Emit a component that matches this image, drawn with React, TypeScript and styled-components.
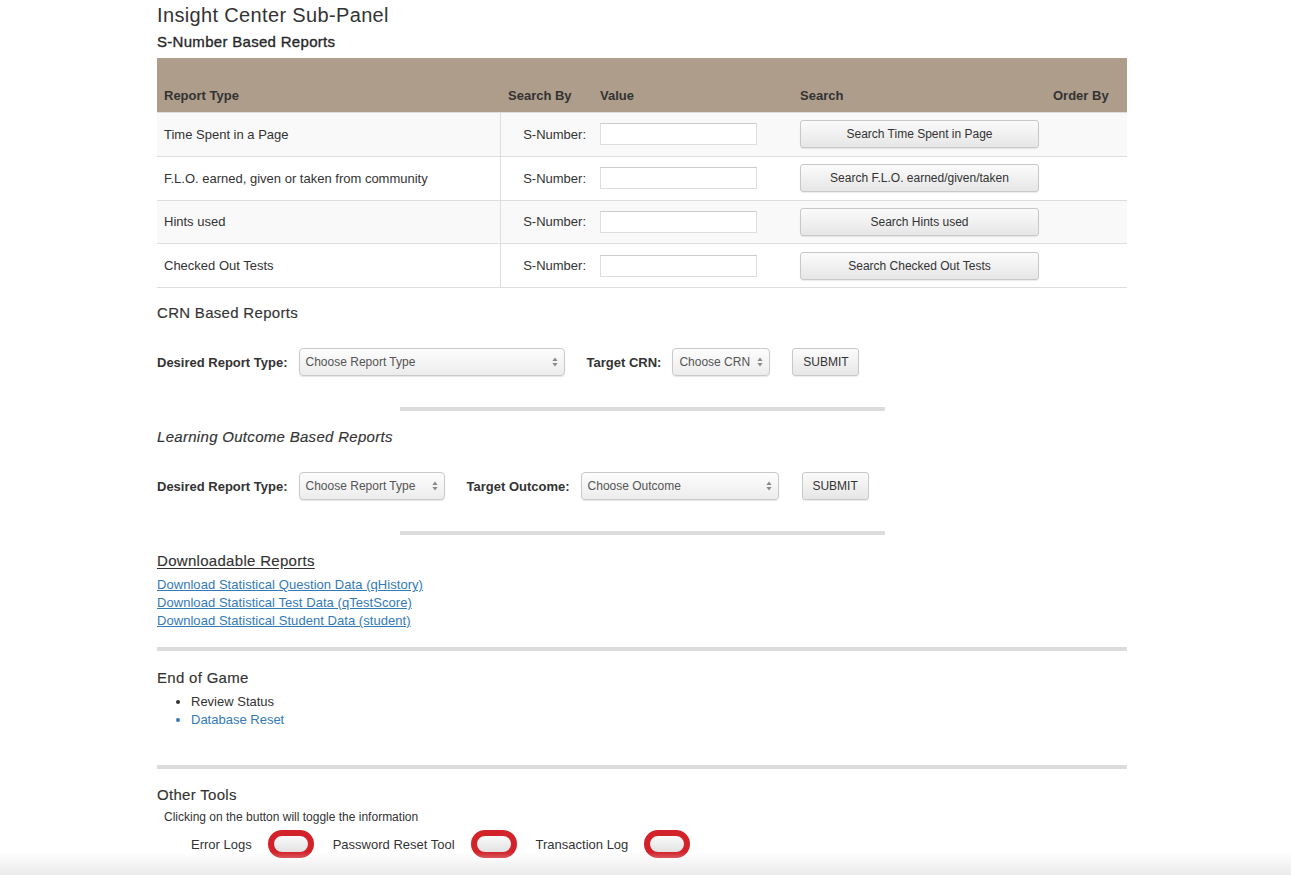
import React from "react";
import styled, { createGlobalStyle } from "styled-components";

const Global = createGlobalStyle`
  html, body { margin: 0; padding: 0; background: #fff; }
  body {
    font-family: "Liberation Sans", Arial, Helvetica, sans-serif;
    font-size: 13px;
    color: #333;
  }
  * { box-sizing: border-box; }
`;

const Page = styled.div`
  width: 100%;
  min-height: 875px;
  display: flex;
  flex-direction: column;
`;

const Content = styled.div`
  margin-left: 157px;
  width: 970px;
  display: flex;
  flex-direction: column;
`;

const Title = styled.h1`
  margin: 4px 0 0;
  font-size: 20px;
  line-height: 22px;
  font-weight: 400;
  color: #333;
  letter-spacing: 0.35px;
`;

const Heading = styled.h3<{ $top: number; $italic?: boolean; $underline?: boolean; $strong?: boolean }>`
  margin: ${(p) => p.$top}px 0 0;
  font-size: 15px;
  line-height: 18px;
  font-weight: 400;
  color: ${(p) => (p.$strong ? "#222" : "#333")};
  letter-spacing: 0.3px;
  font-style: ${(p) => (p.$italic ? "italic" : "normal")};
  text-decoration: ${(p) => (p.$underline ? "underline" : "none")};
  text-underline-offset: 2px;
  -webkit-text-stroke: ${(p) => (p.$strong ? "0.35px #333" : "0.15px #333")};
`;

const Table = styled.div`
  margin-top: 7px;
  display: flex;
  flex-direction: column;
  border-bottom: 1px solid #ddd;
`;

const cols = "344px 92px 200px 253px 81px";

const HeadRow = styled.div`
  display: grid;
  grid-template-columns: ${cols};
  height: 54px;
  background: #ae9d8a;
  align-items: end;
`;

const HeadCell = styled.div`
  padding: 0 7px 7px;
  font-weight: 700;
  font-size: 13px;
  line-height: 18px;
  color: #333;
`;

const BodyRow = styled.div<{ $striped: boolean }>`
  display: grid;
  grid-template-columns: ${cols};
  height: 43.75px;
  border-top: 1px solid #ddd;
  background: ${(p) => (p.$striped ? "#f9f9f9" : "#fff")};
`;

const Cell = styled.div<{ $divider?: boolean; $right?: boolean }>`
  display: flex;
  align-items: center;
  justify-content: ${(p) => (p.$right ? "flex-end" : "flex-start")};
  padding: 0 7px;
  font-size: 13px;
  color: #333;
  border-right: ${(p) => (p.$divider ? "1px solid #ddd" : "none")};
`;

const TextInput = styled.input`
  width: 157px;
  height: 22px;
  border: 1px solid #ddd;
  border-top-color: #ccc;
  background: #fff;
  padding: 2px 4px;
  font-family: inherit;
  font-size: 12px;
  outline: none;
`;

const GrayButton = styled.button<{ $w: number }>`
  width: ${(p) => p.$w}px;
  height: 28px;
  border: 1px solid #c8c8c8;
  border-radius: 3px;
  background: linear-gradient(#fbfbfb, #e6e6e6);
  box-shadow: 0 1px 1px rgba(0, 0, 0, 0.08);
  font-family: "Liberation Sans", Arial, sans-serif;
  font-size: 12px;
  color: #333;
  padding: 0;
  cursor: pointer;
`;

const FormRow = styled.div`
  margin-top: 26px;
  display: flex;
  align-items: center;
  height: 28px;
`;

const FormLabel = styled.span<{ $gap: number }>`
  font-weight: 700;
  font-size: 13px;
  color: #333;
  margin-right: ${(p) => p.$gap}px;
`;

const SelectBox = styled.div<{ $w: number; $after: number }>`
  width: ${(p) => p.$w}px;
  height: 28px;
  margin-right: ${(p) => p.$after}px;
  display: flex;
  align-items: center;
  justify-content: space-between;
  padding: 0 6px 0 6px;
  border: 1px solid #c9c9c9;
  border-radius: 4px;
  background: linear-gradient(#fdfdfd, #ececec);
  box-shadow: 0 1px 1px rgba(0, 0, 0, 0.1);
  font-size: 12px;
  color: #555;
`;

const HalfRule = styled.div`
  margin: 31px auto 0;
  width: 50%;
  height: 4px;
  background: #dcdcdc;
`;

const FullRule = styled.div<{ $top: number }>`
  margin-top: ${(p) => p.$top}px;
  width: 100%;
  height: 4px;
  background: #dcdcdc;
`;

const LinkList = styled.div`
  margin-top: 6px;
  display: flex;
  flex-direction: column;
`;

const Link = styled.a`
  font-size: 13px;
  line-height: 18px;
  color: #337ab7;
  text-decoration: underline;
  align-self: flex-start;
  letter-spacing: 0.05px;
`;

const Bullets = styled.ul`
  margin: 6px 0 0;
  padding-left: 34px;
`;

const Item = styled.li<{ $link?: boolean }>`
  font-size: 13px;
  line-height: 18px;
  color: ${(p) => (p.$link ? "#337ab7" : "#333")};
`;

const Note = styled.div`
  margin-top: 5px;
  padding-left: 7px;
  font-size: 12px;
  line-height: 16px;
  color: #333;
`;

const ToggleRow = styled.div`
  margin-top: 5px;
  padding-left: 34px;
  display: flex;
  align-items: center;
  height: 28px;
`;

const ToggleLabel = styled.span`
  font-size: 13px;
  color: #333;
  margin-right: 16px;
`;

const Pill = styled.button`
  width: 46px;
  height: 28px;
  border: 6px solid #d2232a;
  border-radius: 14px;
  background: linear-gradient(#fafafa, #e2e2e2);
  padding: 0;
  margin-right: 19px;
  cursor: pointer;
`;

const Footer = styled.div`
  margin-top: -6px;
  height: 23px;
  width: 100%;
  background: linear-gradient(rgba(250, 250, 250, 0), #ebebeb);
`;

const Arrows = () => (
  <svg width="6" height="10" viewBox="0 0 6 10" aria-hidden="true">
    <path d="M3 0.5 L5.6 4 H0.4 Z" fill="#8a8a8a" />
    <path d="M3 9.5 L5.6 6 H0.4 Z" fill="#8a8a8a" />
  </svg>
);

const rows = [
  { type: "Time Spent in a Page", btn: "Search Time Spent in Page" },
  { type: "F.L.O. earned, given or taken from community", btn: "Search F.L.O. earned/given/taken" },
  { type: "Hints used", btn: "Search Hints used" },
  { type: "Checked Out Tests", btn: "Search Checked Out Tests" },
];

export default function App() {
  return (
    <Page>
      <Global />
      <Content>
        <Title>Insight Center Sub-Panel</Title>
        <Heading $top={7} $strong>S-Number Based Reports</Heading>
        <Table>
          <HeadRow>
            <HeadCell>Report Type</HeadCell>
            <HeadCell>Search By</HeadCell>
            <HeadCell>Value</HeadCell>
            <HeadCell>Search</HeadCell>
            <HeadCell>Order By</HeadCell>
          </HeadRow>
          {rows.map((r, i) => (
            <BodyRow key={r.type} $striped={i % 2 === 0}>
              <Cell $divider>{r.type}</Cell>
              <Cell $right>S-Number:</Cell>
              <Cell>
                <TextInput type="text" />
              </Cell>
              <Cell>
                <GrayButton $w={239}>{r.btn}</GrayButton>
              </Cell>
              <Cell />
            </BodyRow>
          ))}
        </Table>

        <Heading $top={16}>CRN Based Reports</Heading>
        <FormRow>
          <FormLabel $gap={11}>Desired Report Type:</FormLabel>
          <SelectBox $w={266} $after={22}>
            <span>Choose Report Type</span>
            <Arrows />
          </SelectBox>
          <FormLabel $gap={11}>Target CRN:</FormLabel>
          <SelectBox $w={98} $after={22}>
            <span>Choose CRN</span>
            <Arrows />
          </SelectBox>
          <GrayButton $w={67}>SUBMIT</GrayButton>
        </FormRow>
        <HalfRule />

        <Heading $top={17} $italic>Learning Outcome Based Reports</Heading>
        <FormRow>
          <FormLabel $gap={11}>Desired Report Type:</FormLabel>
          <SelectBox $w={146} $after={22}>
            <span>Choose Report Type</span>
            <Arrows />
          </SelectBox>
          <FormLabel $gap={11}>Target Outcome:</FormLabel>
          <SelectBox $w={198} $after={23}>
            <span>Choose Outcome</span>
            <Arrows />
          </SelectBox>
          <GrayButton $w={67}>SUBMIT</GrayButton>
        </FormRow>
        <HalfRule />

        <Heading $top={17} $underline>Downloadable Reports</Heading>
        <LinkList>
          <Link href="#">Download Statistical Question Data (qHistory)</Link>
          <Link href="#">Download Statistical Test Data (qTestScore)</Link>
          <Link href="#">Download Statistical Student Data (student)</Link>
        </LinkList>
        <FullRule $top={17} />

        <Heading $top={18}>End of Game</Heading>
        <Bullets>
          <Item>Review Status</Item>
          <Item $link>Database Reset</Item>
        </Bullets>
        <FullRule $top={36} />

        <Heading $top={17}>Other Tools</Heading>
        <Note>Clicking on the button will toggle the information</Note>
        <ToggleRow>
          <ToggleLabel>Error Logs</ToggleLabel>
          <Pill aria-label="Error Logs" />
          <ToggleLabel>Password Reset Tool</ToggleLabel>
          <Pill aria-label="Password Reset Tool" />
          <ToggleLabel>Transaction Log</ToggleLabel>
          <Pill aria-label="Transaction Log" />
        </ToggleRow>
      </Content>
      <Footer />
    </Page>
  );
}
